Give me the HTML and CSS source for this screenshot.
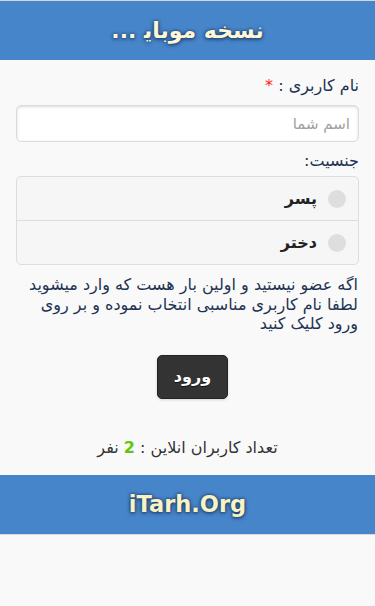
FILE: index.html
```html
<!DOCTYPE html>
<html lang="fa" dir="rtl">
<head>
<meta charset="utf-8">
<title>نسخه موبایل</title>
<link rel="stylesheet" href="styles.css">
</head>
<body>
<div class="page">
  <header class="bar header"><h1>نسخه موبای&zwj; ...</h1></header>
  <main class="content">
    <label class="field-label" for="name">نام کاربری : <span class="req">*</span></label>
    <input id="name" class="text-input" type="text" placeholder="اسم شما">
    <div class="field-label gender-label">جنسیت:</div>
    <div class="radio-group">
      <label class="radio-row"><span class="radio-dot"></span><span class="radio-text">پسر</span></label>
      <label class="radio-row"><span class="radio-dot"></span><span class="radio-text">دختر</span></label>
    </div>
    <p class="note">اگه عضو نیستید و اولین بار هست که وارد میشوید<br>لطفا نام کاربری مناسبی انتخاب نموده و بر روی<br>ورود کلیک کنید</p>
    <div class="btn-wrap"><button class="btn" type="button">ورود</button></div>
    <p class="online">تعداد کاربران انلاین : <b class="count">2</b> نفر</p>
  </main>
  <footer class="bar footer"><h2>iTarh.Org</h2></footer>
</div>
</body>
</html>
```
FILE: styles.css
```css
html, body {
  margin: 0;
  padding: 0;
  background: #f9f9f9;
  font-family: "DejaVu Sans", sans-serif;
}
.page {
  border-top: 1px solid #d6d6d6;
  display: flex;
  flex-direction: column;
}
.bar {
  background: #4785ca;
  display: flex;
  align-items: center;
  justify-content: center;
  height: 59px;
}
.bar h1, .bar h2 {
  margin: 0;
  font-size: 22px;
  font-weight: bold;
  color: #fbf7d8;
  text-shadow: 0 1px 4px #1d3a63, 0 0 3px #1d3a63;
}
.header h1 {
  text-align: center;
  white-space: nowrap;
  line-height: 30px;
}
.footer {
  border-bottom: 1px solid #dadada;
}
.footer h2 {
  direction: ltr;
  font-size: 22.5px;
  color: #f8f2c4;
}
.content {
  padding: 16px 16px 0;
  display: flex;
  flex-direction: column;
}
.field-label {
  display: block;
  font-size: 16px;
  line-height: 20px;
  color: #1e3352;
  margin: 0 0 9px;
}
.req { color: #f22; }
.text-input {
  box-sizing: border-box;
  height: 37px;
  width: 100%;
  border: 1px solid #dcdcdc;
  border-radius: 5px;
  background: #fff;
  box-shadow: inset 0 1px 3px rgba(0,0,0,0.15);
  padding: 0 8px;
  font-family: "DejaVu Sans", sans-serif;
  font-size: 15px;
  color: #333;
  direction: rtl;
  margin: 0;
}
.text-input::placeholder { color: #a0a0a0; }
.gender-label { margin-top: 9px; margin-bottom: 5px; }
.radio-group {
  border: 1px solid #dddddd;
  border-radius: 5px;
  background: #f6f6f6;
  display: flex;
  flex-direction: column;
}
.radio-row {
  height: 43px;
  display: flex;
  align-items: center;
  gap: 11px;
  padding: 0 12px;
  font-size: 16px;
  font-weight: bold;
  color: #222;
}
.radio-row + .radio-row { border-top: 1px solid #dddddd; }
.radio-dot {
  width: 18px;
  height: 18px;
  border-radius: 50%;
  background: #dedede;
  flex: none;
}
.note {
  margin: 10px 1px 0;
  font-size: 16px;
  line-height: 19.5px;
  color: #1e3352;
}
.btn-wrap {
  display: flex;
  justify-content: center;
  margin-top: 21px;
  padding-left: 10px;
}
.btn {
  width: 71px;
  height: 44px;
  background: #333;
  color: #fff;
  border: 1px solid #222;
  border-radius: 5px;
  font-family: "DejaVu Sans", sans-serif;
  font-size: 16px;
  font-weight: bold;
  text-shadow: 0 1px 0 #111;
  box-shadow: 0 1px 3px rgba(0,0,0,0.15);
}
.online {
  text-align: center;
  font-size: 16px;
  color: #333;
  margin: 39px 0 17px;
  line-height: 20px;
}
.count { color: #5fc70a; }
```
